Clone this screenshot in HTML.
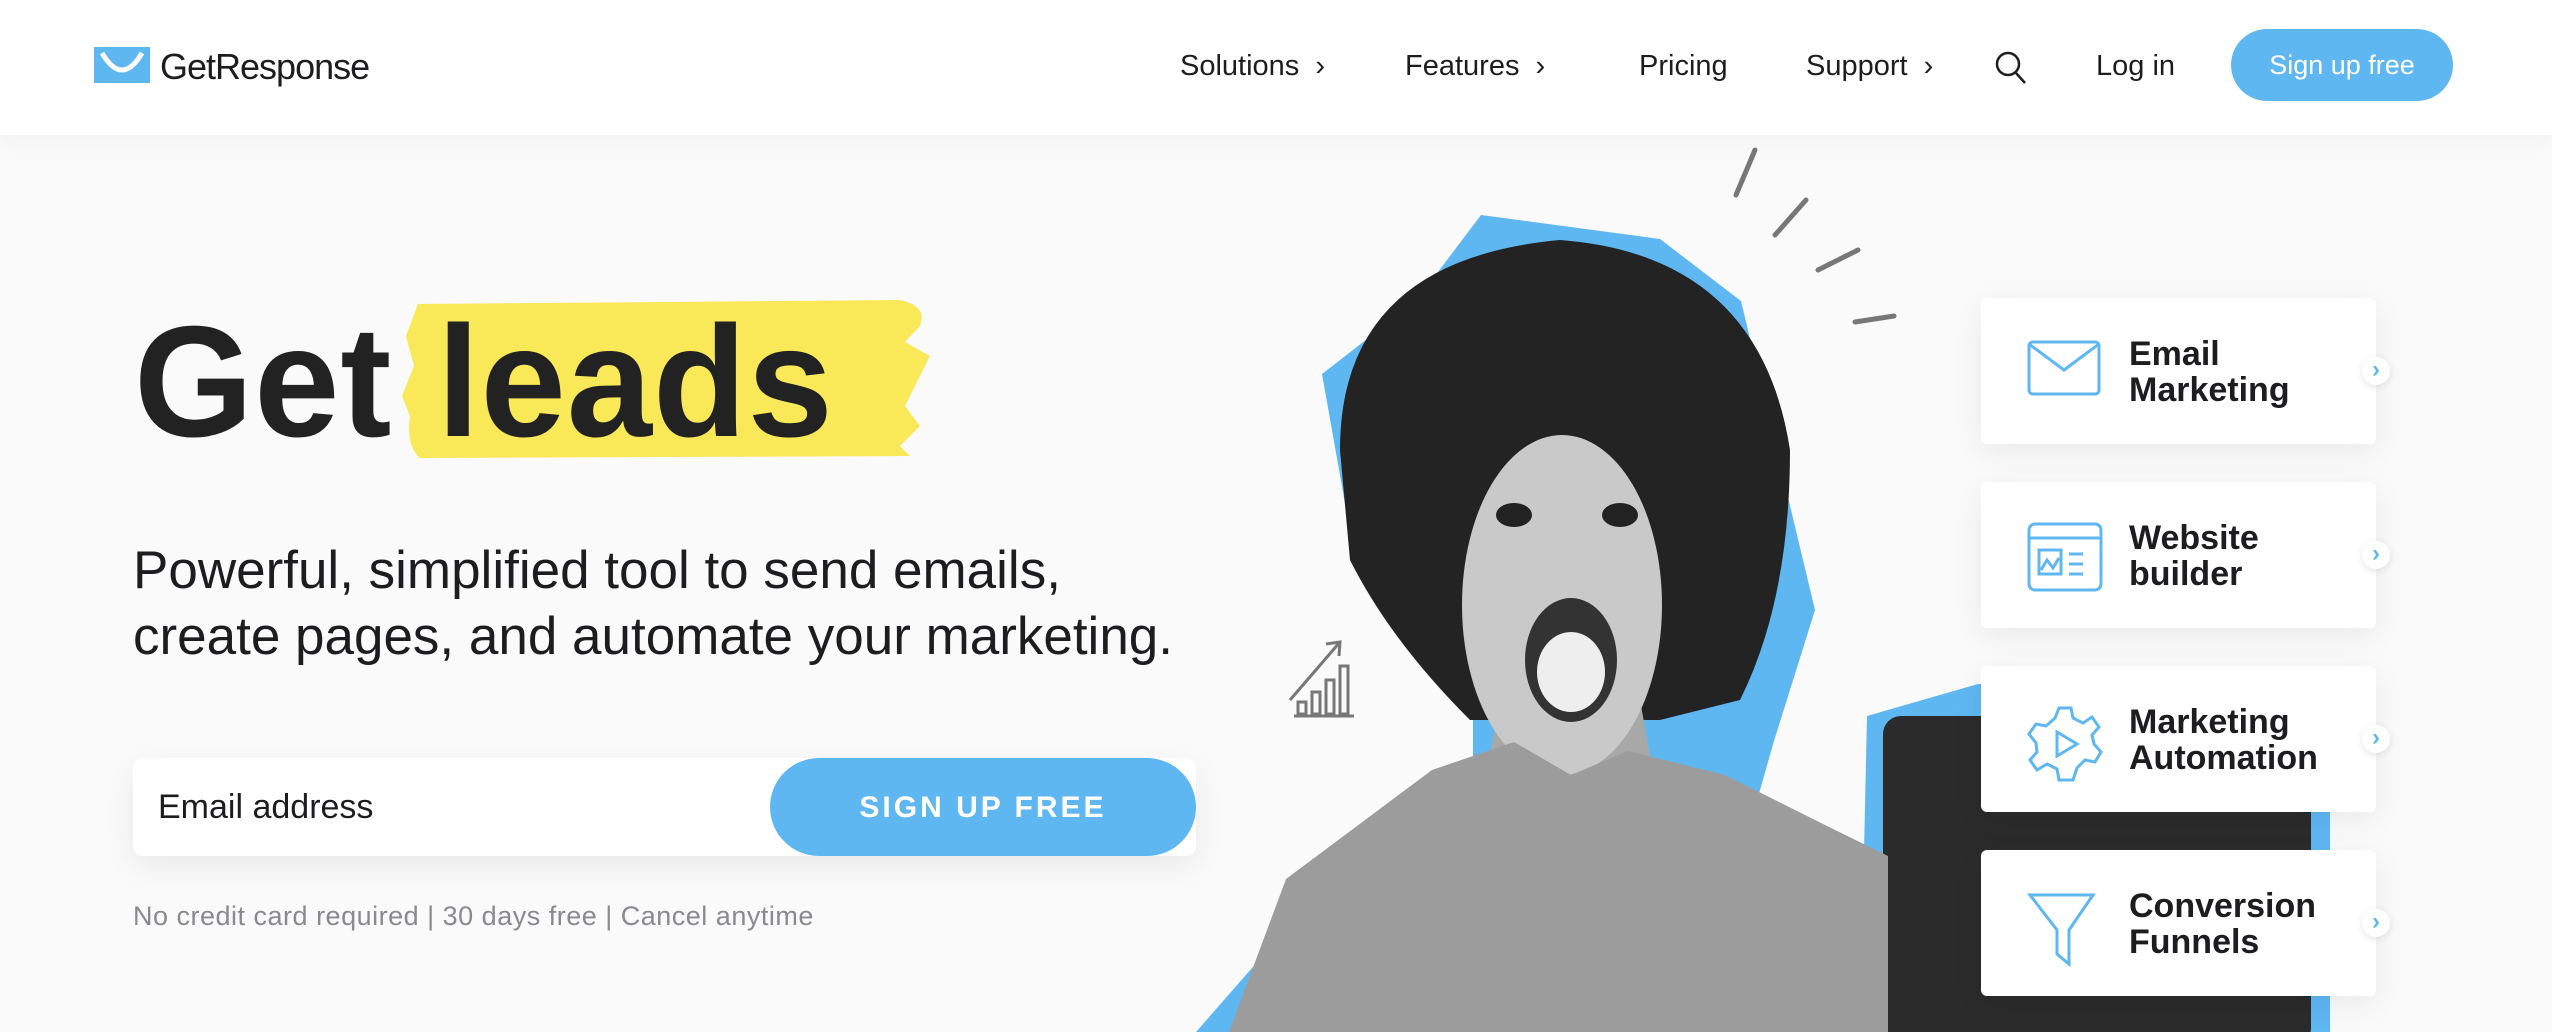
<!DOCTYPE html>
<html><head><meta charset="utf-8"><style>
*{margin:0;padding:0;box-sizing:border-box}
body{width:2552px;height:1032px;overflow:hidden;background:#fafafb;font-family:"Liberation Sans",sans-serif;position:relative;color:#1d1d1f}
.hdr{position:absolute;left:0;top:0;width:2552px;height:135px;background:#fff;box-shadow:0 6px 20px rgba(0,0,0,.04)}
.a{position:absolute;white-space:nowrap}
.nav{font-size:29px;top:50px;color:#1d1d1f}
.card{position:absolute;left:1981px;width:395px;height:146px;background:#fff;border-radius:6px;box-shadow:0 8px 30px rgba(0,0,0,.07)}
.card .t{position:absolute;left:148px;top:38px;font-size:34px;font-weight:bold;line-height:36px;color:#1d1d1f}
.card .c{position:absolute;right:-14px;top:59px;width:28px;height:28px;border-radius:50%;background:#fff;box-shadow:0 2px 8px rgba(0,0,0,.1);color:#5fb7f2;font-size:24px;line-height:26px;text-align:center;font-weight:bold}
.card svg{position:absolute;left:46px;top:40px}
.h{position:absolute;top:292px;font-size:158px;font-weight:bold;color:#222;transform:scaleX(0.97);transform-origin:0 0;letter-spacing:1px;white-space:nowrap}
</style></head><body>
<div class="hdr"></div>
<svg class="a" style="left:94px;top:47px" width="56" height="36" viewBox="0 0 56 36"><rect width="56" height="36" fill="#5fb7f2"/><path d="M8 6 Q28 40 48 6" stroke="#fff" stroke-width="5" fill="none"/></svg>
<div class="a" style="left:160px;top:46px;font-size:36px;letter-spacing:-1px;color:#1d1d1f">GetResponse</div>
<div class="a nav" style="left:1180px">Solutions&nbsp; ›</div>
<div class="a nav" style="left:1405px">Features&nbsp; ›</div>
<div class="a nav" style="left:1639px">Pricing</div>
<div class="a nav" style="left:1806px">Support&nbsp; ›</div>
<svg class="a" style="left:1994px;top:50px" width="34" height="36" viewBox="0 0 34 36"><circle cx="14" cy="14" r="11" stroke="#1d1d1f" stroke-width="2.5" fill="none"/><path d="M22 23 L31 33" stroke="#1d1d1f" stroke-width="2.5"/></svg>
<div class="a nav" style="left:2096px">Log in</div>
<div class="a" style="left:2231px;top:29px;width:222px;height:72px;border-radius:36px;background:#5fb7f2;color:#fff;font-size:27px;line-height:72px;text-align:center">Sign up free</div>

<svg class="a" style="left:400px;top:296px" width="535" height="166" viewBox="0 0 535 166"><path d="M18 8 L500 4 Q528 10 520 30 L505 46 L530 60 L505 110 L520 130 L500 150 L510 160 L20 162 Q6 150 10 120 L2 100 L14 70 L6 40 Z" fill="#f9e857"/></svg>
<div class="h" style="left:134px">Get</div>
<div class="h" style="left:437px">leads</div>

<div class="a" style="left:133px;top:538px;font-size:53px;line-height:66px;color:#1d1d1f">Powerful, simplified tool to send emails,<br>create pages, and automate your marketing.</div>

<div class="a" style="left:133px;top:758px;width:1063px;height:98px;background:#fff;border-radius:10px;box-shadow:0 10px 30px rgba(0,0,0,.07)"></div>
<div class="a" style="left:158px;top:788px;font-size:34px;color:#1d1d1f">Email address</div>
<div class="a" style="left:770px;top:758px;width:426px;height:98px;border-radius:49px;background:#5fb7f2;color:#fff;font-size:30px;font-weight:bold;letter-spacing:3px;line-height:100px;text-align:center">SIGN UP FREE</div>
<div class="a" style="left:133px;top:901px;font-size:27px;color:#8a8a8e;letter-spacing:.5px">No credit card required | 30 days free | Cancel anytime</div>

<svg class="a" style="left:0;top:0" width="2552" height="1032" viewBox="0 0 2552 1032">
<g stroke="#777" stroke-width="5" stroke-linecap="round"><path d="M1755 150 L1736 195"/><path d="M1806 200 L1775 235"/><path d="M1858 250 L1818 270"/><path d="M1894 316 L1855 322"/></g>
<g stroke="#777" stroke-width="3" fill="none"><path d="M1290 700 L1340 642 M1326 644 L1340 642 L1339 656"/><path d="M1294 716 H1354"/><rect x="1298" y="702" width="8" height="12"/><rect x="1312" y="692" width="8" height="22"/><rect x="1326" y="680" width="8" height="34"/><rect x="1340" y="666" width="8" height="48"/></g>
<path d="M1867 716 L1978 684 L2330 684 L2330 1032 L1860 1032 Z" fill="#5fb7f2"/>
<rect x="1883" y="716" width="428" height="330" rx="18" fill="#2b2b2b"/>
<path d="M1481 215 L1660 239 L1741 301 L1815 610 L1774 741 L1730 895 L1722 977 L1872 1032 L1196 1032 L1294 920 L1473 797 L1473 716 L1351 537 L1322 374 L1416 301 Z" fill="#5fb7f2"/>
<path d="M1340 450 Q1340 260 1560 240 Q1760 255 1790 450 Q1790 600 1740 700 L1660 720 L1470 720 Q1390 640 1350 560 Z" fill="#232323"/>
<path d="M1500 700 L1640 700 L1660 810 L1480 810 Z" fill="#a8a8a8"/>
<ellipse cx="1562" cy="605" rx="100" ry="170" fill="#c9c9c9"/>
<ellipse cx="1514" cy="515" rx="18" ry="12" fill="#222"/><ellipse cx="1620" cy="515" rx="18" ry="12" fill="#222"/>
<ellipse cx="1571" cy="660" rx="46" ry="62" fill="#333"/><ellipse cx="1571" cy="672" rx="34" ry="40" fill="#eee"/>
<path d="M1229 1032 L1286 879 L1432 770 L1514 742 L1571 775 L1628 751 L1725 775 L1823 824 L1888 856 L1888 1032 Z" fill="#9c9c9c"/>
</svg>

<div class="card" style="top:298px"><svg width="74" height="60" viewBox="0 0 74 60"><rect x="2" y="4" width="70" height="52" rx="4" fill="none" stroke="#5fb7f2" stroke-width="3"/><path d="M2 6 L37 32 L72 6" fill="none" stroke="#5fb7f2" stroke-width="3"/></svg><div class="t">Email<br>Marketing</div><div class="c">›</div></div>
<div class="card" style="top:482px"><svg width="76" height="70" viewBox="0 0 76 70"><rect x="2" y="2" width="72" height="66" rx="6" fill="none" stroke="#5fb7f2" stroke-width="3"/><path d="M2 16 H74" stroke="#5fb7f2" stroke-width="3"/><rect x="12" y="28" width="22" height="24" fill="none" stroke="#5fb7f2" stroke-width="3"/><path d="M14 48 L20 38 L26 46 L32 36 M42 32 H56 M42 42 H56 M42 52 H56" stroke="#5fb7f2" stroke-width="3" fill="none"/></svg><div class="t">Website<br>builder</div><div class="c">›</div></div>
<div class="card" style="top:666px"><svg width="76" height="76" viewBox="0 0 76 76"><path d="M32 2 H44 L46 12 L56 17 L65 11 L72 21 L65 29 L67 38 L74 46 L68 56 L58 54 L50 62 L46 74 H32 L30 63 L20 58 L10 64 L3 54 L10 46 L9 37 L2 28 L9 18 L19 20 L28 12 Z" fill="none" stroke="#5fb7f2" stroke-width="3"/><path d="M30 26 L50 38 L30 50 Z" fill="none" stroke="#5fb7f2" stroke-width="3"/></svg><div class="t">Marketing<br>Automation</div><div class="c">›</div></div>
<div class="card" style="top:850px"><svg width="70" height="80" viewBox="0 0 70 80"><path d="M3 5 H66 L42 40 V74 L30 64 V40 Z" fill="none" stroke="#5fb7f2" stroke-width="3"/></svg><div class="t">Conversion<br>Funnels</div><div class="c">›</div></div>
</body></html>
